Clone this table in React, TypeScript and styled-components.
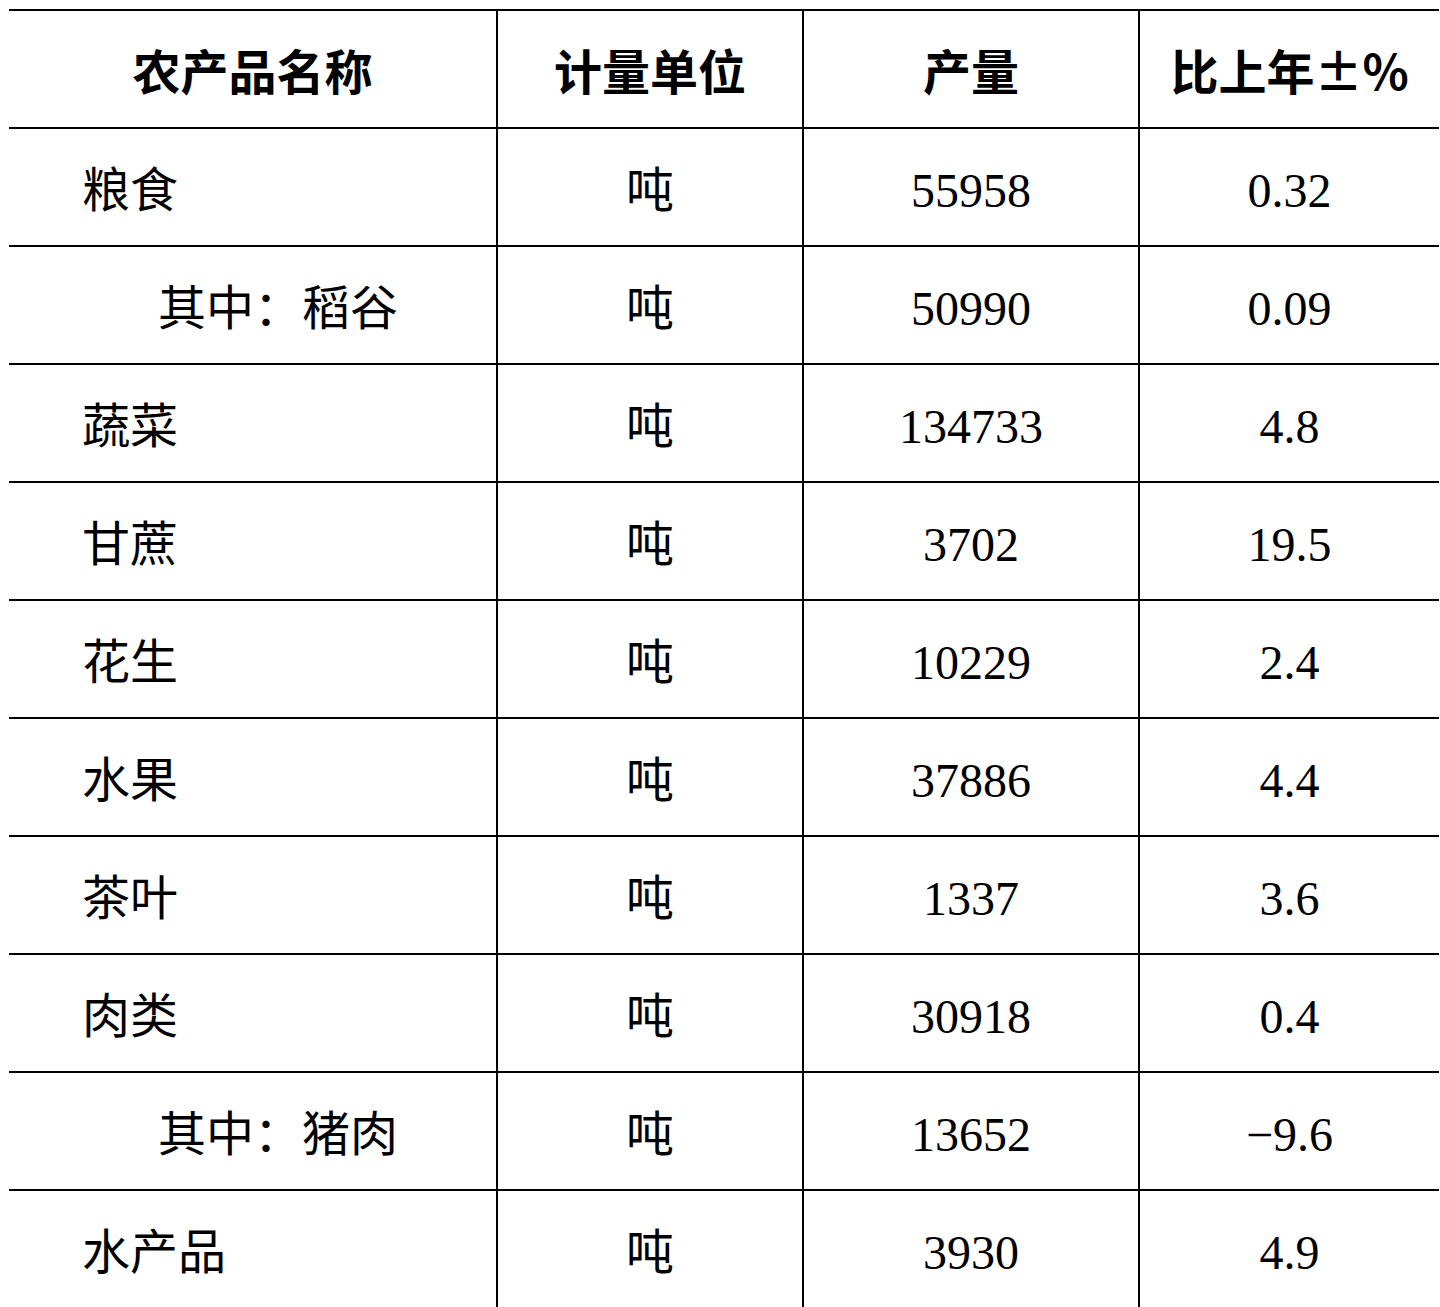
import React from "react";
import styled, { createGlobalStyle } from "styled-components";

const GlobalStyle = createGlobalStyle`
  html, body {
    margin: 0;
    padding: 0;
    background: #ffffff;
  }
  body {
    font-family: "Liberation Serif", "Noto Sans CJK SC", serif;
    color: #000000;
  }
`;

const Table = styled.div`
  margin: 9px 0 0 9px;
  width: 1430px;
  border-top: 2px solid #000;
  display: flex;
  flex-direction: column;
`;

const Row = styled.div<{ $last?: boolean }>`
  display: grid;
  grid-template-columns: 487px 306px 336px 1fr;
  height: 116px;
  border-bottom: ${(p) => (p.$last ? "none" : "2px solid #000")};
`;

const Cell = styled.div<{ $first?: boolean; $head?: boolean; $indent?: boolean }>`
  display: flex;
  align-items: center;
  justify-content: ${(p) => (p.$first && !p.$head ? "flex-start" : "center")};
  padding-left: ${(p) => (p.$first && !p.$head ? (p.$indent ? "149px" : "73px") : "0")};
  padding-top: ${(p) => (p.$head ? "0" : "8px")};
  box-sizing: border-box;
  border-left: ${(p) => (p.$first ? "none" : "2px solid #000")};
  font-family: ${(p) =>
    p.$head
      ? `"Noto Sans CJK SC", sans-serif`
      : `"Liberation Serif", "Noto Sans CJK SC", serif`};
  font-weight: ${(p) => (p.$head ? 700 : 400)};
  font-size: 48px;
  line-height: 1;
  white-space: nowrap;
`;

type Item = { name: string; unit: string; output: string; change: string; indent?: boolean };

const rows: Item[] = [
  { name: "粮食", unit: "吨", output: "55958", change: "0.32" },
  { name: "其中：稻谷", unit: "吨", output: "50990", change: "0.09", indent: true },
  { name: "蔬菜", unit: "吨", output: "134733", change: "4.8" },
  { name: "甘蔗", unit: "吨", output: "3702", change: "19.5" },
  { name: "花生", unit: "吨", output: "10229", change: "2.4" },
  { name: "水果", unit: "吨", output: "37886", change: "4.4" },
  { name: "茶叶", unit: "吨", output: "1337", change: "3.6" },
  { name: "肉类", unit: "吨", output: "30918", change: "0.4" },
  { name: "其中：猪肉", unit: "吨", output: "13652", change: "−9.6", indent: true },
  { name: "水产品", unit: "吨", output: "3930", change: "4.9" },
];

export default function App() {
  return (
    <>
      <GlobalStyle />
      <Table>
        <Row>
          <Cell $first $head>农产品名称</Cell>
          <Cell $head>计量单位</Cell>
          <Cell $head>产量</Cell>
          <Cell $head>比上年±%</Cell>
        </Row>
        {rows.map((r, i) => (
          <Row key={i} $last={i === rows.length - 1}>
            <Cell $first $indent={r.indent}>{r.name}</Cell>
            <Cell>{r.unit}</Cell>
            <Cell>{r.output}</Cell>
            <Cell>{r.change}</Cell>
          </Row>
        ))}
      </Table>
    </>
  );
}
